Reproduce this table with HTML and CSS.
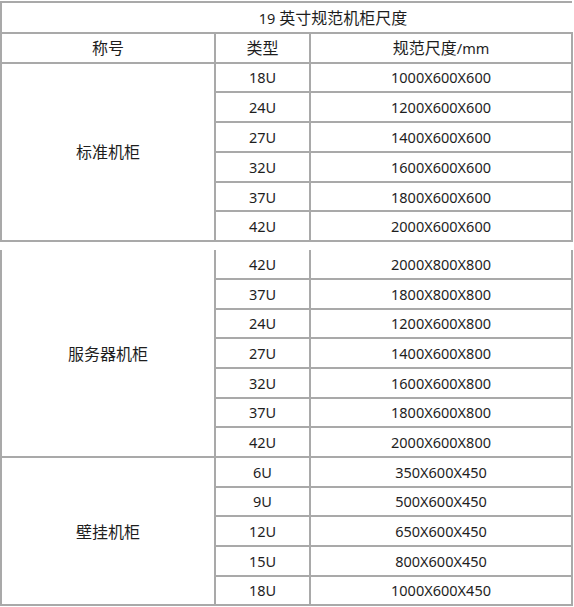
FILE: index.html
```html
<!DOCTYPE html>
<html lang="zh-CN">
<head>
<meta charset="utf-8">
<title>19 英寸规范机柜尺度</title>
<link rel="stylesheet" href="styles.css">
</head>
<body>
<table class="spec spec-top">
  <colgroup><col class="c1"><col class="c2"><col class="c3"></colgroup>
  <tr class="title-row"><td colspan="3" class="title">19 <span class="zh">英寸规范机柜尺度</span></td></tr>
  <tr class="head-row"><td><span class="zh">称号</span></td><td><span class="zh">类型</span></td><td><span class="zh">规范尺度</span>/mm</td></tr>
  <tr><td rowspan="6" class="group"><span class="zh">标准机柜</span></td><td>18U</td><td>1000X600X600</td></tr>
  <tr><td>24U</td><td>1200X600X600</td></tr>
  <tr><td>27U</td><td>1400X600X600</td></tr>
  <tr><td>32U</td><td>1600X600X600</td></tr>
  <tr><td>37U</td><td>1800X600X600</td></tr>
  <tr><td>42U</td><td>2000X600X600</td></tr>
</table>
<table class="spec spec-bottom">
  <colgroup><col class="c1"><col class="c2"><col class="c3"></colgroup>
  <tr class="first"><td rowspan="7" class="group"><span class="zh">服务器机柜</span></td><td>42U</td><td>2000X800X800</td></tr>
  <tr><td>37U</td><td>1800X800X800</td></tr>
  <tr><td>24U</td><td>1200X600X800</td></tr>
  <tr><td>27U</td><td>1400X600X800</td></tr>
  <tr><td>32U</td><td>1600X600X800</td></tr>
  <tr><td>37U</td><td>1800X600X800</td></tr>
  <tr><td>42U</td><td>2000X600X800</td></tr>
  <tr><td rowspan="5" class="group"><span class="zh">壁挂机柜</span></td><td>6U</td><td>350X600X450</td></tr>
  <tr><td>9U</td><td>500X600X450</td></tr>
  <tr><td>12U</td><td>650X600X450</td></tr>
  <tr><td>15U</td><td>800X600X450</td></tr>
  <tr><td>18U</td><td>1000X600X450</td></tr>
</table>
</body>
</html>
```
FILE: styles.css
```css
html, body {
  margin: 0;
  padding: 0;
  background: #ffffff;
}

body {
  font-family: "Noto Sans", "Noto Sans CJK SC", sans-serif;
  font-size: 14.5px;
  color: #1e1e1e;
}

.zh {
  font-family: "Noto Sans CJK SC", sans-serif;
  font-size: 16px;
}

.spec {
  border-collapse: collapse;
  table-layout: fixed;
  width: 573px;
}

.c1 { width: 214px; }
.c2 { width: 95px; }
.c3 { width: 262px; }

.spec td {
  border: 2px solid #a9a9a9;
  height: 27.8px;
  padding: 0;
  text-align: center;
  vertical-align: middle;
  line-height: 20px;
  white-space: nowrap;
}

.spec-top {
  margin-top: 1px;
}

.spec .title-row td {
  height: 29px;
  padding-left: 92px;
  border-right-style: hidden;
}

.spec .head-row td {
  height: 27.5px;
}

.spec-bottom {
  margin-top: 8px;
}

.spec-bottom td {
  height: 27.67px;
}

.spec-bottom .first td {
  border-top-style: hidden;
}
```
